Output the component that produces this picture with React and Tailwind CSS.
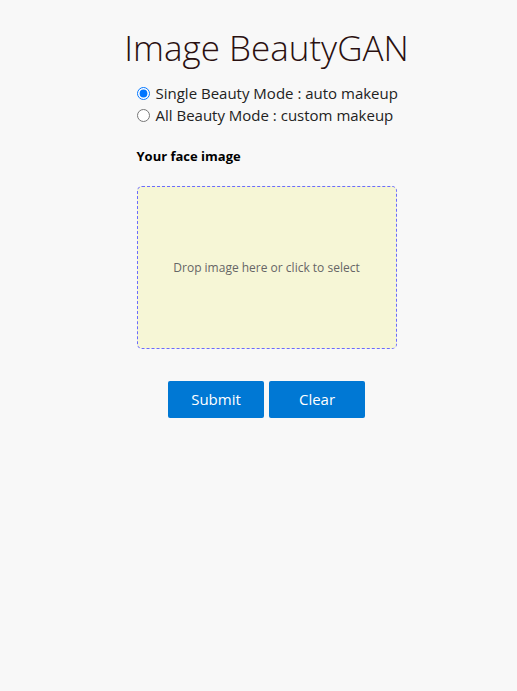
import { useState } from 'react';

const App = () => {
  const [mode, setMode] = useState('single');

  return (
    <div className="min-h-[691px] bg-[#f8f8f8] font-['Open_Sans',sans-serif] text-[#222]">
      <div className="flex justify-center pl-4 pt-[22px]">
        <div className="flex w-[260px] flex-col">
          <h1 className="-mx-6 whitespace-nowrap text-center text-[35px] font-light leading-[52px] text-[#2a1010]">
            Image BeautyGAN
          </h1>

          <div className="mt-[8px] flex flex-col text-[15px] leading-[22px]">
            <label className="flex items-center gap-[6px] whitespace-nowrap">
              <input
                type="radio"
                name="mode"
                checked={mode === 'single'}
                onChange={() => setMode('single')}
                className="m-0 h-[13px] w-[13px] accent-[#0075ff]"
              />
              Single Beauty Mode : auto makeup
            </label>
            <label className="flex items-center gap-[6px] whitespace-nowrap">
              <input
                type="radio"
                name="mode"
                checked={mode === 'all'}
                onChange={() => setMode('all')}
                className="m-0 h-[13px] w-[13px] accent-[#0075ff]"
              />
              All Beauty Mode : custom makeup
            </label>
          </div>

          <div className="mt-[20px] text-[13px] font-bold leading-[20px] text-black">Your face image</div>

          <div className="mt-[20px] flex h-[163px] items-center justify-center rounded-[5px] border border-dashed border-[#6b6bff] bg-[#f6f6d6]">
            <span className="text-[12px] text-[#666]">Drop image here or click to select</span>
          </div>

          <div className="mt-[32px] flex justify-center gap-[5px]">
            <button className="h-[37px] w-[96px] rounded-[2px] bg-[#0078d4] text-[15px] text-white">Submit</button>
            <button className="h-[37px] w-[96px] rounded-[2px] bg-[#0078d4] text-[15px] text-white">Clear</button>
          </div>
        </div>
      </div>
    </div>
  );
};

export default App;
